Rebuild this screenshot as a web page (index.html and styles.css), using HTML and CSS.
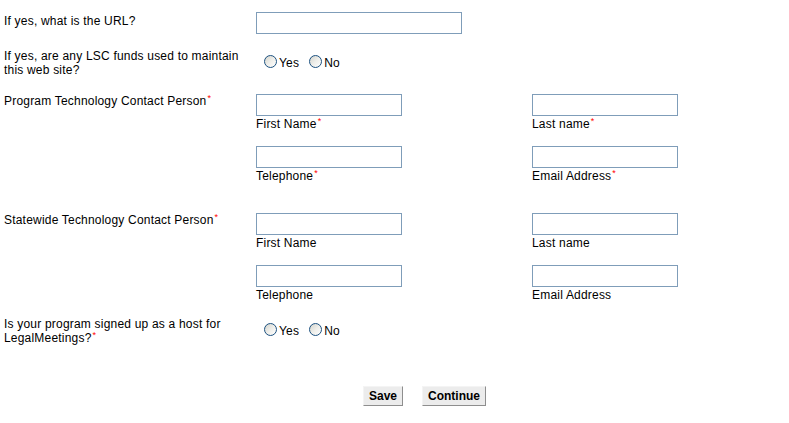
FILE: index.html
```html
<!DOCTYPE html>
<html>
<head>
<meta charset="utf-8">
<link rel="stylesheet" href="styles.css">
</head>
<body>
<form class="form">
  <div class="row r-url">
    <div class="q">If yes, what is the URL?</div>
    <div class="cell"><input class="txt wide" type="text"></div>
  </div>

  <div class="row r-lsc">
    <div class="q">If yes, are any LSC funds used to maintain this web site?</div>
    <div class="cell radios">
      <label class="opt"><input class="rad" type="radio" name="lsc"><span>Yes</span></label>
      <label class="opt"><input class="rad" type="radio" name="lsc"><span>No</span></label>
    </div>
  </div>

  <div class="row r-prog">
    <div class="q">Program Technology Contact Person<span class="req">*</span></div>
    <div class="cell">
      <div class="field"><input class="txt" type="text"><div class="sub">First Name<span class="req">*</span></div></div>
      <div class="field"><input class="txt" type="text"><div class="sub">Telephone<span class="req">*</span></div></div>
    </div>
    <div class="cell">
      <div class="field"><input class="txt" type="text"><div class="sub">Last name<span class="req">*</span></div></div>
      <div class="field"><input class="txt" type="text"><div class="sub">Email Address<span class="req">*</span></div></div>
    </div>
  </div>

  <div class="row r-state">
    <div class="q">Statewide Technology Contact Person<span class="req">*</span></div>
    <div class="cell">
      <div class="field"><input class="txt" type="text"><div class="sub">First Name</div></div>
      <div class="field"><input class="txt" type="text"><div class="sub">Telephone</div></div>
    </div>
    <div class="cell">
      <div class="field"><input class="txt" type="text"><div class="sub">Last name</div></div>
      <div class="field"><input class="txt" type="text"><div class="sub">Email Address</div></div>
    </div>
  </div>

  <div class="row r-legal">
    <div class="q">Is your program signed up as a host for LegalMeetings?<span class="req">*</span></div>
    <div class="cell radios">
      <label class="opt"><input class="rad" type="radio" name="lm"><span>Yes</span></label>
      <label class="opt"><input class="rad" type="radio" name="lm"><span>No</span></label>
    </div>
  </div>

  <div class="actions">
    <button class="btn" type="button">Save</button>
    <button class="btn" type="button">Continue</button>
  </div>
</form>
</body>
</html>
```

FILE: styles.css
```css
html, body {
  margin: 0;
  padding: 0;
  background: #ffffff;
}
body {
  font-family: "Liberation Sans", Arial, sans-serif;
  font-size: 12px;
  line-height: 14px;
  letter-spacing: 0.2px;
  color: #000000;
}
.form {
  padding: 12px 4px 0 4px;
}
.row {
  display: grid;
  grid-template-columns: 252px 276px 1fr;
}
.q {
  width: 236px;
}
.r-url .q {
  padding-top: 2px;
}
.cell {
  display: flex;
  flex-direction: column;
}
.txt {
  box-sizing: border-box;
  width: 146px;
  height: 22px;
  margin: 0;
  padding: 1px 2px;
  border: 1px solid #7f9db9;
  background: #ffffff;
  font: inherit;
  outline: none;
}
.txt.wide {
  width: 206px;
}
.field + .field {
  margin-top: 15px;
}
.sub {
  height: 14px;
  padding-top: 1px;
}
.req {
  color: #ff0000;
  font-size: 9px;
  line-height: 0;
  vertical-align: 4px;
  margin-left: 1px;
}
.radios {
  flex-direction: row;
  align-items: center;
  padding-left: 8px;
  padding-bottom: 3px;
}
.opt {
  display: flex;
  align-items: center;
  margin-right: 10px;
}
.rad {
  -webkit-appearance: none;
  appearance: none;
  box-sizing: border-box;
  width: 13px;
  height: 13px;
  margin: 0 2px 0 0;
  border: 1px solid #1c5180;
  border-radius: 50%;
  background: linear-gradient(135deg, #d4d4cc 0%, #eeeeea 50%, #ffffff 100%);
}
.opt span {
  padding-top: 2px;
}
.r-url {
  margin-bottom: 15px;
}
.r-lsc {
  margin-bottom: 17px;
}
.r-prog {
  margin-bottom: 30px;
}
.r-state {
  margin-bottom: 15px;
}
.actions {
  display: flex;
  gap: 19px;
  padding-left: 359px;
  margin-top: 41px;
}
.btn {
  box-sizing: border-box;
  height: 20px;
  margin: 0;
  padding: 0 5px;
  font-family: "Liberation Sans", Arial, sans-serif;
  font-size: 12px;
  font-weight: bold;
  letter-spacing: 0;
  color: #000000;
  background: #ececec;
  border: 1px solid;
  border-color: #f4f4f4 #8e8e8e #8e8e8e #f4f4f4;
  border-radius: 0;
}
```
